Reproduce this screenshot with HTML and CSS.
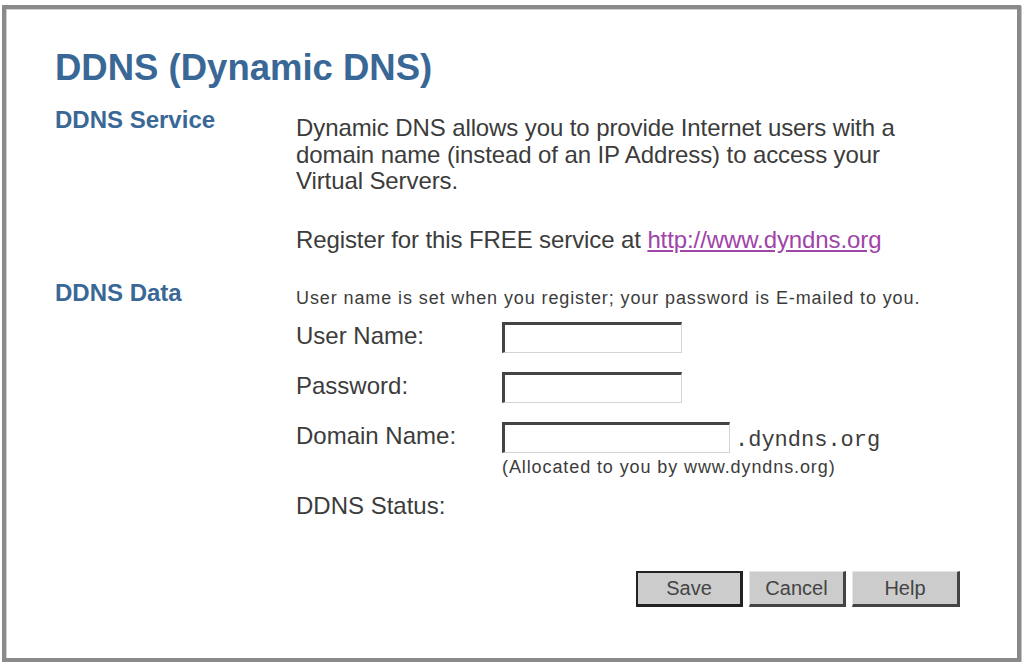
FILE: index.html
```html
<!DOCTYPE html>
<html>

<head>
    <meta charset="utf-8" />
    <title>DDNS (Dynamic DNS)</title>
    <link rel="stylesheet" href="styles.css">
</head>

<body>
    <div class="frame">
        <h1 class="title">DDNS (Dynamic DNS)</h1>

        <div class="section">
            <div class="label">DDNS Service</div>
            <div class="content">
                <p class="text">Dynamic DNS allows you to provide Internet users with a<br>domain name (instead of an IP Address) to access your<br>Virtual Servers.</p>
                <p class="text register">Register for this FREE service at <a href="#" class="link">http://www.dyndns.org</a></p>
            </div>
        </div>

        <div class="section data">
            <div class="label">DDNS Data</div>
            <div class="content">
                <p class="note">User name is set when you register; your password is E-mailed to you.</p>
                <div class="fields">
                    <div class="fieldName">User Name:</div>
                    <div class="fieldValue"><input class="box" type="text"></div>

                    <div class="fieldName">Password:</div>
                    <div class="fieldValue"><input class="box" type="password"></div>

                    <div class="fieldName">Domain Name:</div>
                    <div class="fieldValue">
                        <div class="domainRow"><input class="box wide" type="text"><span class="suffix">.dyndns.org</span></div>
                        <div class="hint">(Allocated to you by www.dyndns.org)</div>
                    </div>

                    <div class="fieldName status">DDNS Status:</div>
                    <div class="fieldValue"></div>
                </div>
            </div>
        </div>

        <div class="buttons">
            <button class="btn save">Save</button>
            <button class="btn cancel">Cancel</button>
            <button class="btn help">Help</button>
        </div>
    </div>
</body>

</html>
```

FILE: styles.css
```css
* {
    box-sizing: border-box;
}

h1,
p,
body,
div {
    margin: 0px;
    padding: 0px;
}

body {
    font-family: "Liberation Sans", Arial, sans-serif;
    background-color: #ffffff;
    color: #3c3c3c;
}

.frame {
    margin: 5px 5px 0px 2px;
    height: 657px;
    border: 4px solid #8a8a8a;
    box-shadow: inset 1px 1px 0px #d0d0d0, 1px 1px 0px #c4c4c4;
    padding: 37px 0px 0px 49px;
}

.title {
    font-size: 36.5px;
    font-weight: bold;
    color: #3a6896;
    line-height: 44px;
}

.section {
    display: flex;
    margin-top: 17px;
}

.label {
    width: 241px;
    font-size: 24px;
    font-weight: bold;
    color: #3a6896;
    line-height: 26px;
}

.content {
    flex: 1;
}

.text {
    font-size: 24px;
    line-height: 26.5px;
    padding-top: 8px;
    letter-spacing: -0.1px;
}

.register {
    padding-top: 32px;
}

.link {
    color: #a044a8;
}

.data {
    margin-top: 27px;
}

.note {
    font-size: 18px;
    line-height: 24px;
    padding-top: 6px;
    letter-spacing: 0.9px;
}

.fields {
    display: grid;
    grid-template-columns: 206px auto;
    row-gap: 19px;
    margin-top: 12px;
    font-size: 24px;
}

.fieldName {
    line-height: 28px;
}

.status {
    margin-top: -4px;
}

.box {
    width: 180px;
    height: 31px;
    border-style: solid;
    border-width: 3px 1px 1px 3px;
    border-color: #444444 #d4d4d4 #d4d4d4 #444444;
    background-color: #ffffff;
    display: block;
}

.wide {
    width: 228px;
}

.domainRow {
    display: flex;
    align-items: flex-end;
}

.suffix {
    font-family: "Liberation Mono", "Courier New", monospace;
    font-size: 22px;
    padding-left: 5px;
    line-height: 24px;
}

.hint {
    font-size: 18px;
    line-height: 20px;
    padding-top: 4px;
    letter-spacing: 0.9px;
}

.buttons {
    display: flex;
    gap: 6px;
    margin-top: 51px;
    margin-left: 581px;
}

.btn {
    width: 97px;
    height: 36px;
    padding: 0px;
    font-family: "Liberation Sans", Arial, sans-serif;
    font-size: 20px;
    color: #444444;
    background-color: #cccccc;
    border-style: solid;
    border-width: 1px 3px 3px 1px;
    border-color: #e6e6e6 #444444 #444444 #e6e6e6;
}

.save {
    width: 107px;
    border-width: 2px 3px 3px 2px;
    border-color: #222222;
}

.help {
    width: 108px;
}
```
